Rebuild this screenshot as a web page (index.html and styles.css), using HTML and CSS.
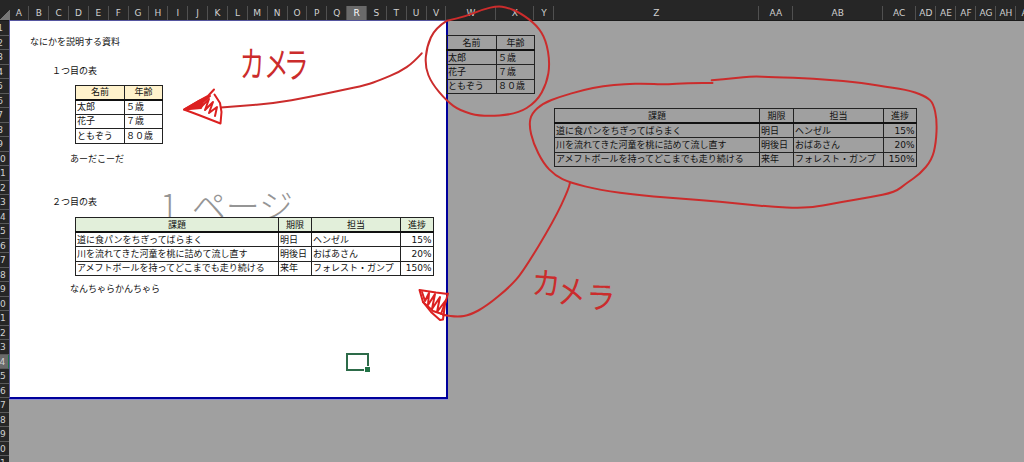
FILE: index.html
```html
<!DOCTYPE html>
<html lang="ja">
<head>
  <meta charset="UTF-8">
  <title>カメラ機能</title>
  <link rel="stylesheet" href="styles.css">
</head>
<body>
  <div class="col-header" id="colHeader">
    <div class="corner"></div>
  </div>

  <div class="workspace">
    <div class="row-header" id="rowHeader"></div>

    <div class="page">
      <div class="watermark">1 ページ</div>
      <p class="title">なにかを説明する資料</p>
      <p class="caption">１つ目の表</p>
      <table class="people">
        <colgroup><col class="c-name"><col class="c-age"></colgroup>
        <tr><th>名前</th><th>年齢</th></tr>
        <tr><td>太郎</td><td>５歳</td></tr>
        <tr><td>花子</td><td>７歳</td></tr>
        <tr><td>ともぞう</td><td>８０歳</td></tr>
      </table>
      <p class="note">あーだこーだ</p>
      <p class="caption second">２つ目の表</p>
      <table class="tasks">
        <colgroup><col class="c-task"><col class="c-due"><col class="c-owner"><col class="c-rate"></colgroup>
        <tr><th>課題</th><th>期限</th><th>担当</th><th>進捗</th></tr>
        <tr><td>道に食パンをちぎってばらまく</td><td>明日</td><td>ヘンゼル</td><td class="num">15%</td></tr>
        <tr><td>川を流れてきた河童を桃に詰めて流し直す</td><td>明後日</td><td>おばあさん</td><td class="num">20%</td></tr>
        <tr><td>アメフトボールを持ってどこまでも走り続ける</td><td>来年</td><td>フォレスト・ガンプ</td><td class="num">150%</td></tr>
      </table>
      <p class="note last">なんちゃらかんちゃら</p>
      <div class="active-cell"></div>
    </div>

    <!-- 印刷範囲外 -->
    <div class="outside">
      <table class="people">
        <colgroup><col class="c-name"><col class="c-age"></colgroup>
        <tr><th>名前</th><th>年齢</th></tr>
        <tr><td>太郎</td><td>５歳</td></tr>
        <tr><td>花子</td><td>７歳</td></tr>
        <tr><td>ともぞう</td><td>８０歳</td></tr>
      </table>
      <table class="tasks">
        <colgroup><col class="c-task"><col class="c-due"><col class="c-owner"><col class="c-rate"></colgroup>
        <tr><th>課題</th><th>期限</th><th>担当</th><th>進捗</th></tr>
        <tr><td>道に食パンをちぎってばらまく</td><td>明日</td><td>ヘンゼル</td><td class="num">15%</td></tr>
        <tr><td>川を流れてきた河童を桃に詰めて流し直す</td><td>明後日</td><td>おばあさん</td><td class="num">20%</td></tr>
        <tr><td>アメフトボールを持ってどこまでも走り続ける</td><td>来年</td><td>フォレスト・ガンプ</td><td class="num">150%</td></tr>
      </table>
    </div>
  </div>

  <!-- 手書きの赤ペン -->
  <svg class="ink" width="1024" height="462" viewBox="0 0 1024 462">
    <path data-points="447,20.7 435,28.3 426.7,46.7 425,66.7 431.7,83.3 446.7,101 460,110.7 481.7,116.7 516.7,114.3 536.7,101.7 546.7,83.3 550,63.3 546,40 536.7,25 520,12.7 506.7,7.3 497.3,6 483.3,9.3 466.7,16 447,20.7"/>
    <path data-points="712.5,83 690,82.7 663,84.7 645,83.5 625,84 603,86 583,90 560,96.7 543,103.3 531.7,113.3 529,125 533.3,143.3 543.3,163.3 555,175.5 570,182.7 600,190 640,195.5 693,199.3 746.7,204.3 773.3,207 800,208 816.7,206.7 840,202.3 870,197.3 895,192.3 906.7,183 920,174 931.7,160 936,143.3 937,120 933.3,103.3 926.7,97 911.7,91 886.7,86.7 853.3,81.7 813.3,78.7 773.3,77 751.7,76.3 735,78 711.7,80.3"/>
    <path data-points="421.7,53.3 413.3,62.5 400,71.7 380,80 366.7,85 340,90.7 310,97 273,103.3 240,106 221,107.5"/>
    <path data-points="570,182.7 569.3,188 553.3,221.7 523,271.7 510,286.7 486.7,306 470,315 458,317 443,315"/>
    <g class="head">
      <path class="filled" d="M184 109.500L198 101.500L210 96L203 102L201 108Z"/>
      <path d="M214 89.500L208 96L198 101.500L184 109.500L200 115.500L220.500 123.500L221.500 112L220 103L214.500 94.500"/>
      <path d="M200 108L209 99L205 110L213 102L209 113L217 107L215 116"/>
      <path d="M448 293.500L445 304L443 319.500L440 320L431 312L423 302L419.500 290L436 292.500L448 294"/>
      <path d="M422 292L425 301L429 293L428 305L435 294L432 309L440 297L437 312L446 300L441 314M423 302L433 311L445 315"/>
    </g>
    <text transform="scale(.85 1.2)" x="282 310.5 334" y="64.500 64 65">カメラ</text>
    <text transform="scale(1 1.08)" x="531 557 586" y="272 281.500 285.500" rotate="4 -4 2">カメラ</text>
  </svg>

  <script src="script.js"></script>
</body>
</html>
```

FILE: styles.css
```css
* {
  box-sizing: border-box;
}

body {
  position: relative;
  width: 1024px;
  height: 462px;
  margin: 0;
  overflow: hidden;
  background-color: #a0a0a0;
  color: #111;
  font-family: "DejaVu Sans", "Noto Sans CJK JP", sans-serif;
  font-size: 9px;
}

/* 列見出し */
.col-header {
  display: flex;
  width: 1024px;
  height: 21px;
  padding-top: 6px;
  overflow: hidden;
  background-color: #262626;
  border-bottom: 1px solid #1a1a1a;
  color: #d0d0d0;
}

.col-header .corner {
  flex: none;
  width: 9.5px;
  background: linear-gradient(135deg, transparent 55%, #777 56%);
}

.col-header span {
  flex: none;
  border-right: 1px solid #505050;
  line-height: 14px;
  text-align: center;
}

.col-header .selected {
  background-color: #6a6a6a;
  color: #fff;
}

.workspace {
  display: flex;
  height: 441px;
}

/* 行見出し：左半分は画面の外 */
.row-header {
  flex: none;
  width: 18px;
  margin-left: -9px;
  overflow: hidden;
  background-color: #262626;
  color: #d0d0d0;
}

.row-header span {
  display: block;
  height: 14.52px;
  border-bottom: 1px solid #5a5a5a;
  line-height: 14px;
  text-align: center;
}

.row-header .selected {
  background-color: #6a6a6a;
  border-right: 1px solid #217346;
}

.page {
  position: relative;
  flex: none;
  width: 439px;
  height: 378px;
  padding-top: 14px;
  background-color: #fff;
  border: solid #00009c;
  border-width: 0 2px 2px 1px;
  border-left-color: #6060a0;
  box-shadow: 0 -1px #5555a0, 0 1px #8c8cd0;
}

p {
  height: 14.5px;
  margin: 0;
  line-height: 14.5px;
  white-space: nowrap;
}

.title {
  margin-left: 20px;
}

.caption {
  margin: 14.5px 0 0 42px;
}

.caption.second {
  margin-top: 28.5px;
}

.note {
  margin: 8px 0 0 60px;
}

.note.last {
  margin-top: 6px;
}

table {
  position: relative;
  border-collapse: collapse;
  table-layout: fixed;
}

tr {
  height: 14.5px;
}

th, td {
  height: 14.5px;
  padding: 0 1.5px 0 1px;
  border: 1px solid #222;
  font-weight: normal;
  line-height: 12px;
  text-align: left;
  white-space: nowrap;
}

th {
  padding: 0;
  border-bottom: 2px solid #111;
  text-align: center;
}

.num {
  text-align: right;
}

.page table {
  margin-left: 65px;
  background-color: #fff;
}

.page .people {
  width: 87px;
  margin-top: 6px;
}

.page .tasks {
  width: 358px;
  margin-top: 8px;
}

.people th {
  background-color: #fff2cc;
}

.tasks th {
  background-color: #e2efda;
}

.page .c-name { width: 49px; }
.page .c-age { width: 38px; }
.page .c-task { width: 203px; }
.page .c-due { width: 33px; }
.page .c-owner { width: 89px; }
.page .c-rate { width: 33px; }

/* ページ番号の透かし */
.watermark {
  position: absolute;
  top: 159px;
  left: 150px;
  color: #959595;
  font-family: "Noto Sans CJK JP", sans-serif;
  font-size: 34px;
  font-weight: 300;
  line-height: 50px;
  white-space: nowrap;
  word-spacing: 6px;
}

.active-cell {
  position: absolute;
  top: 332px;
  left: 336px;
  width: 23px;
  height: 18px;
  border: 2px solid #2d6b49;
}

.active-cell::after {
  content: "";
  position: absolute;
  right: -3px;
  bottom: -3px;
  width: 5px;
  height: 5px;
  background-color: #217346;
  border: solid #fff;
  border-width: 1px 0 0 1px;
}

.outside {
  flex: 1;
  display: flex;
  align-items: flex-start;
}

.outside th {
  background-color: transparent;
}

.outside .people {
  flex: none;
  width: 88px;
  margin: 14px 0 0 -2px;
}

.outside .tasks {
  flex: none;
  width: 363px;
  margin: 87px 0 0 19px;
}

.outside .c-name { width: 50px; }
.outside .c-age { width: 38px; }
.outside .c-task { width: 205px; }
.outside .c-due { width: 34px; }
.outside .c-owner { width: 90px; }
.outside .c-rate { width: 33px; }

.ink {
  position: absolute;
  top: 0;
  left: 0;
  pointer-events: none;
}

.ink path {
  fill: none;
  stroke: #cb2c2c;
  stroke-width: 2;
  stroke-linecap: round;
  stroke-linejoin: round;
}

.ink .head path {
  stroke: #dc2020;
}

.ink .head .filled {
  fill: #dc2020;
}

.ink text {
  fill: #cb2c2c;
  font-family: "Noto Sans CJK JP", sans-serif;
  font-size: 29px;
}
```

FILE: script.js
```js
const columns = [];
'ABCDEFGHIJKLMNOPQRSTUV'.split('').forEach(c => columns.push([c, 19.87]));
columns.push(['W', 50], ['X', 38], ['Y', 20], ['Z', 205], ['AA', 34], ['AB', 89.5], ['AC', 33.5]);
['AD', 'AE', 'AF', 'AG', 'AH', 'AI'].forEach(c => columns.push([c, 20]));

const colHeader = document.getElementById('colHeader');
columns.forEach(([name, width]) => {
  const cell = document.createElement('span');
  cell.textContent = name;
  cell.style.width = width + 'px';
  if (name === 'R') cell.className = 'selected';
  colHeader.appendChild(cell);
});

const rowHeader = document.getElementById('rowHeader');
for (let i = 1; i <= 31; i++) {
  const cell = document.createElement('span');
  cell.textContent = i;
  if (i === 24) cell.className = 'selected';
  rowHeader.appendChild(cell);
}

// smooth each pen stroke through the midpoints of its points
document.querySelectorAll('path[data-points]').forEach(path => {
  const pts = path.dataset.points.split(' ').map(p => p.split(',').map(Number));
  let d = 'M' + pts[0];
  for (let i = 1; i < pts.length - 1; i++) {
    const [x, y] = pts[i];
    const [nx, ny] = pts[i + 1];
    d += ` Q${x},${y} ${(x + nx) / 2},${(y + ny) / 2}`;
  }
  path.setAttribute('d', d + ' L' + pts[pts.length - 1]);
});
```
